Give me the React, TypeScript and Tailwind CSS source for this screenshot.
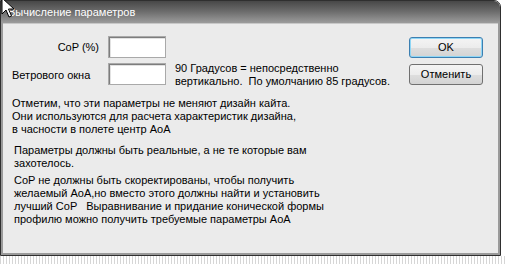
import React from "react";

function Cursor() {
  return (
    <svg
      className="absolute left-[1px] top-[-3px]"
      width="14"
      height="22"
      viewBox="0 0 14 22"
    >
      <path
        d="M1 1 L1 17 L5 13 L8 20 L10.5 19 L7.5 12 L13 12 Z"
        fill="#fff"
        stroke="#000"
        strokeWidth="1"
        strokeLinejoin="miter"
      />
    </svg>
  );
}

function Input() {
  return (
    <div className="w-[58px] h-[22px] bg-white border border-[#a9a9a9] shadow-[inset_1px_1px_0_#7d7d7d,inset_2px_2px_0_#e2e2e2]" />
  );
}

export default function App() {
  return (
    <div className="relative w-[506px] h-[264px] bg-white overflow-hidden font-['Liberation_Sans',Arial,sans-serif] text-black">
      <div className="w-[501px] h-[256px] flex flex-col border border-[#2f2f2f] rounded-tr-[7px] overflow-hidden">
        <div className="h-[22px] shrink-0 bg-[linear-gradient(#474747,#6e6e6e_50%,#9c9c9c)] flex items-center pl-[7px] text-[11px] text-white">
          Вычисление параметров
        </div>
        <div className="flex-1 bg-[#9a9a9a] px-[2px] pb-[2px]">
          <div className="h-full bg-[#ebebeb] border-t border-[#c8c8c8] text-[11px] leading-[13px]">
            <div className="flex pt-[12px]">
              <div className="flex-1">
                <div className="flex items-center h-[22px]">
                  <span className="w-[96px] text-right">CoP (%)</span>
                  <div className="ml-[9px]">
                    <Input />
                  </div>
                </div>
                <div className="flex mt-[5px]">
                  <span className="w-[105px] pl-[9px] leading-[22px] mt-[1px]">Ветрового окна</span>
                  <Input />
                  <div className="ml-[9px] mt-[-1px] whitespace-pre">
                    {"90 Градусов = непосредственно\nвертикально.  По умолчанию 85 градусов."}
                  </div>
                </div>
              </div>
              <div className="w-[74px] mr-[15px] mt-[1px] flex flex-col gap-[6px]">
                <button className="h-[21px] rounded-[3px] border border-[#3c7fb1] shadow-[inset_0_0_0_1px_#8fd6f5] bg-[linear-gradient(#f4f4f4,#ececec_50%,#dedede_51%,#d3d3d3)] text-[11px] leading-none">
                  OK
                </button>
                <button className="h-[21px] rounded-[3px] border border-[#707070] bg-[linear-gradient(#f4f4f4,#ececec_50%,#dedede_51%,#d3d3d3)] text-[11px] leading-none">
                  Отменить
                </button>
              </div>
            </div>
            <div className="mt-[9px] pl-[9px] whitespace-pre">
              {"Отметим, что эти параметры не меняют дизайн кайта.\nОни используются для расчета характеристик дизайна,\nв часности в полете центр AoA"}
            </div>
            <div className="mt-[8px] pl-[11px] whitespace-pre">
              {"Параметры должны быть реальные, а не те которые вам\nзахотелось."}
            </div>
            <div className="mt-[4px] pl-[11px] whitespace-pre">
              {"CoP не должны быть скоректированы, чтобы получить\nжелаемый AoA,но вместо этого должны найти и установить\nлучший CoP   Выравнивание и придание конической формы\nпрофилю можно получить требуемые параметры AoA"}
            </div>
          </div>
        </div>
      </div>
      <div className="h-[8px] bg-[repeating-linear-gradient(90deg,#d6d6d6_0_1px,#ffffff_1px_3px)]" />
      <Cursor />
    </div>
  );
}
